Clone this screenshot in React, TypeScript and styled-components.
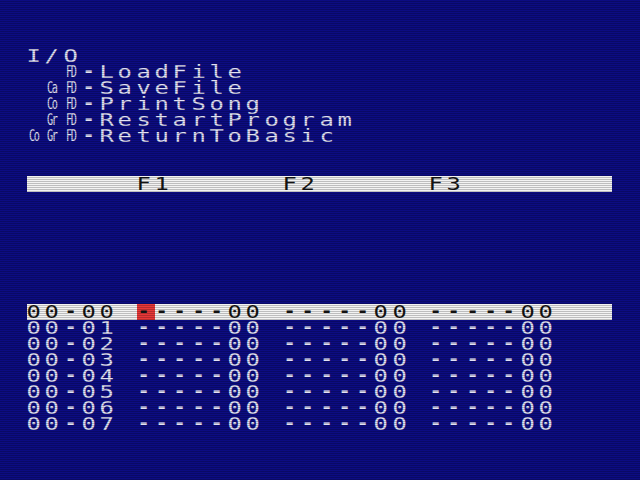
import React from 'react';
import styled, { createGlobalStyle } from 'styled-components';

const Global = createGlobalStyle`
  html, body { margin: 0; padding: 0; background: #0c0c82; }
`;

const Frame = styled.div`
  position: relative;
  width: 640px;
  height: 480px;
  overflow: hidden;
  box-sizing: border-box;
  padding: 48px 0 0 27px;
  background: #0c0c82;
  font-family: "DejaVu Sans Mono", "Liberation Mono", monospace;
  color: #e2e2f6;
  &::after {
    content: '';
    position: absolute;
    inset: 0;
    pointer-events: none;
    background: repeating-linear-gradient(to bottom, transparent 0 1px, rgba(0, 0, 0, 0.22) 1px 2px);
  }
`;

const Screen = styled.div`
  width: 585px;
  display: flex;
  flex-direction: column;
`;

const Line = styled.div<{ $bar?: boolean }>`
  display: grid;
  grid-template-columns: repeat(32, 1fr);
  height: 16px;
  background: ${(p) => (p.$bar ? '#f2f2f2' : 'transparent')};
  color: ${(p) => (p.$bar ? '#141414' : 'inherit')};
`;

const Cell = styled.span<{ $cursor?: boolean }>`
  display: flex;
  align-items: center;
  justify-content: flex-start;
  height: 16px;
  overflow: visible;
  background: ${(p) => (p.$cursor ? '#e83838' : 'transparent')};
  color: ${(p) => (p.$cursor ? '#141414' : 'inherit')};
`;

const Glyph = styled.span<{ $dash?: boolean }>`
  display: inline-block;
  width: 13.5px;
  text-align: center;
  font-size: 17px;
  line-height: 16px;
  font-weight: ${(p) => (p.$dash ? 700 : 400)};
  transform: ${(p) => (p.$dash ? 'translateY(-1.5px) scaleX(1.15)' : 'scaleX(1.4)')};
`;

const Key = styled.span`
  display: inline-block;
  width: 13.5px;
  text-align: center;
  font-size: 12px;
  line-height: 16px;
  letter-spacing: -1.5px;
  white-space: nowrap;
  transform: scale(0.85, 1.35);
`;

type Item = string | { key: string } | { cursor: string };

const toItems = (s: string): Item[] => s.split('');

const Row = ({ items, bar }: { items: Item[]; bar?: boolean }) => (
  <Line $bar={bar}>
    {items.map((it, i) => {
      if (typeof it === 'string') {
        return (
          <Cell key={i}>
            <Glyph $dash={it === '-'}>{it === ' ' ? '\u00a0' : it}</Glyph>
          </Cell>
        );
      }
      if ('key' in it) {
        return (
          <Cell key={i}>
            <Key>{it.key}</Key>
          </Cell>
        );
      }
      return (
        <Cell key={i} $cursor>
          <Glyph $dash>{it.cursor}</Glyph>
        </Cell>
      );
    })}
  </Line>
);

const FN = { key: 'FD' };
const menu: Item[][] = [
  toItems('I/O'),
  [' ', ' ', FN, '-', ...toItems('LoadFile')],
  [' ', { key: 'Ca' }, FN, '-', ...toItems('SaveFile')],
  [' ', { key: 'Co' }, FN, '-', ...toItems('PrintSong')],
  [' ', { key: 'Gr' }, FN, '-', ...toItems('RestartProgram')],
  [{ key: 'Co' }, { key: 'Gr' }, FN, '-', ...toItems('ReturnToBasic')],
];

const patterns = Array.from({ length: 8 }, (_, i) => `00-0${i}`);

export default function App() {
  return (
    <>
      <Global />
      <Frame>
        <Screen>
          {menu.map((m, i) => (
            <Row key={i} items={m} />
          ))}
          <Row items={[]} />
          <Row items={[]} />
          <Row bar items={toItems('      F1      F2      F3')} />
          {Array.from({ length: 7 }, (_, i) => (
            <Row key={`b${i}`} items={[]} />
          ))}
          {patterns.map((p, i) =>
            i === 0 ? (
              <Row
                key={p}
                bar
                items={[...toItems(p + ' '), { cursor: '-' }, ...toItems('----00 -----00 -----00')]}
              />
            ) : (
              <Row key={p} items={toItems(p + ' -----00 -----00 -----00')} />
            )
          )}
        </Screen>
      </Frame>
    </>
  );
}
